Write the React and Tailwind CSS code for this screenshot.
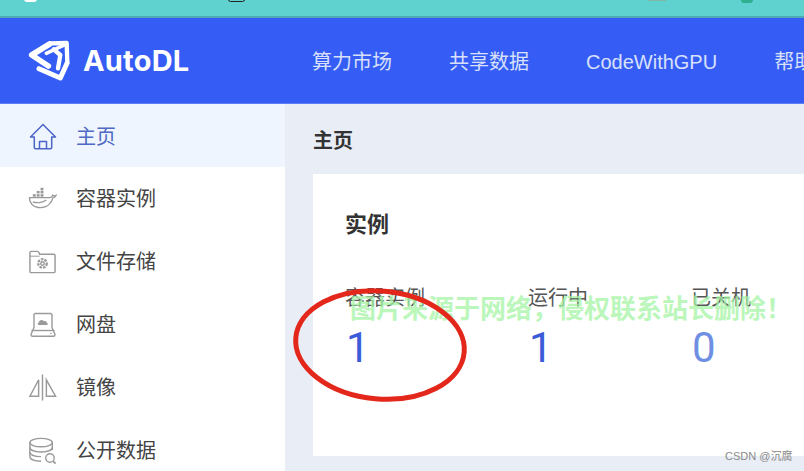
import React from "react";

const cjk = '"Liberation Sans","Noto Sans CJK SC",sans-serif';

const Dock = () => (
  <svg width="30" height="24" viewBox="0 0 30 24" fill="none" stroke="#9a9a9a" strokeWidth="1.300">
    <path d="M1.500 10.500h21c1.500 0 2.500-.8 3-2.500 1 .7 2.500.8 3.500.3-.6 1.300-1.600 2-3 2.200-1.600 5.500-6 10.500-13 10.500-7.500 0-11.500-4.500-11.500-10.500z" />
    <path d="M5 15c4 1.500 10 1 14-2" />
    <g fill="#9a9a9a" stroke="none">
      <rect x="5" y="7" width="3" height="2.600" />
      <rect x="9" y="7" width="3" height="2.600" />
      <rect x="13" y="7" width="3" height="2.600" />
      <rect x="9" y="3.600" width="3" height="2.600" />
      <rect x="13" y="3.600" width="3" height="2.600" />
      <rect x="13" y="0.400" width="3" height="2.600" />
    </g>
  </svg>
);

const Folder = () => (
  <svg width="30" height="26" viewBox="0 0 30 26" fill="none" stroke="#9a9a9a" strokeWidth="1.500">
    <path d="M2 3.500c0-1 .5-1.500 1.500-1.500h6c1 0 1.500.5 2 1.500l.5 1.500h14.500c1 0 1.500.5 1.500 1.500v16c0 1-.5 1.500-1.500 1.500h-23c-1 0-1.500-.5-1.500-1.500z" />
    <path d="M2 7h10" strokeWidth="1" />
    <circle cx="15" cy="14.500" r="1.800" />
    <circle cx="15" cy="14.500" r="4.400" strokeWidth="2.400" strokeDasharray="2.600 1.100" />
  </svg>
);

const Disk = () => (
  <svg width="28" height="26" viewBox="0 0 28 26" fill="none" stroke="#9a9a9a" strokeWidth="1.400">
    <path d="M6 1.500h16l1 1v13l3 7c0 1-.6 1.800-1.600 1.800H3.600C2.600 24.300 2 23.500 2 22.500l3-7v-13z" />
    <path d="M2.500 18.500h23" />
    <path d="M10 13c-1.500 0-1.800-2.200-.2-2.600.3-2.300 3.400-3.300 5-1.300 1.400-.6 3 .3 3 1.700 1.500.3 1.300 2.200-.3 2.200z" fill="#9a9a9a" stroke="none" />
    <circle cx="22" cy="21.500" r=".8" fill="#9a9a9a" stroke="none" />
  </svg>
);

const Mirror = () => (
  <svg width="30" height="30" viewBox="0 0 30 30" fill="none" stroke="#9a9a9a" strokeWidth="1.500">
    <path d="M15 1v27" />
    <path d="M11 6.500V23.500H2z" />
    <path d="M19 6.500V23.500H28.500z" />
  </svg>
);

const Data = () => (
  <svg width="31" height="30" viewBox="0 0 31 30" fill="none" stroke="#9a9a9a" strokeWidth="1.500">
    <ellipse cx="14" cy="6" rx="12" ry="4.500" />
    <path d="M2 6v15c0 3 5 5 12 5" />
    <path d="M26 6v8" />
    <path d="M2 11c0 3 5 5 12 5s12-2 12-5" />
    <path d="M2 16c0 3 5 5 12 5" />
    <circle cx="23.500" cy="22.500" r="4.500" fill="#fff" />
    <path d="M27 26l2.500 2.500" strokeWidth="2" />
  </svg>
);

const Home = () => (
  <svg width="28" height="28" viewBox="0 0 28 28" fill="none" stroke="#4a64c8" strokeWidth="1.500" strokeLinejoin="round">
    <path d="M14 1.500L1.500 14h3.800v10.500c0 .7.500 1.200 1.200 1.200h15c.7 0 1.200-.5 1.200-1.200V14h3.800z" />
    <path d="M10.500 25.500v-7h7v7" />
  </svg>
);

const Logo = () => (
  <svg width="42" height="41" viewBox="85 120 126 123" fill="none" stroke="#fff" strokeLinecap="round" strokeLinejoin="round">
    <path d="M150 132L96 165L146 198" strokeWidth="17" />
    <path d="M152 130L201 129L203 188" strokeWidth="13" />
    <path d="M196 134L140 160" strokeWidth="11" />
    <path d="M162 148L182 165L175 205" strokeWidth="13" />
    <path d="M118 206L182 234L202 190" strokeWidth="15" />
  </svg>
);

const items = [
  ["容器实例", <Dock />],
  ["文件存储", <Folder />],
  ["网盘", <Disk />],
  ["镜像", <Mirror />],
  ["公开数据", <Data />],
];

const nav = ["算力市场", "共享数据", "CodeWithGPU", "帮助文档"];

const stats = [
  ["容器实例", "1", "text-[#3b5bd9]", "w-[183px]"],
  ["运行中", "1", "text-[#3b5bd9]", "w-[163px]"],
  ["已关机", "0", "text-[#6f8fe3]", "w-[80px]"],
];

export default function App() {
  return (
    <div
      className="relative w-[804px] h-[471px] overflow-hidden flex flex-col bg-[#e9edf5]"
      style={{ fontFamily: cjk }}
    >
      <div className="relative h-[18px] shrink-0 bg-[#5fd2d0] border-b-2 border-[#4fa9b5]">
        <div className="absolute left-[24px] -top-[4px] w-[13px] h-[6px] rounded-full bg-white" />
        <div className="absolute left-[228px] -top-[3px] w-[17px] h-[5px] rounded-sm border border-[#222] bg-[#5fd2d0]" />
        <div className="absolute left-[647px] -top-[3px] w-[20px] h-[4px] rounded-full bg-[#7fb8a0]" />
        <div className="absolute left-[741px] -top-[3px] w-[12px] h-[6px] rounded-full bg-[#2fae90]" />
      </div>
      <header className="h-[86px] shrink-0 bg-[#355df5] flex items-center border-b border-[#5f80f5]">
        <div className="w-[312px] shrink-0 pl-[28px] flex items-center gap-[13px]">
          <Logo />
          <span className="text-[29px] leading-none font-bold text-white tracking-[0.2px]" style={{ fontFamily: '"Inter",sans-serif' }}>AutoDL</span>
        </div>
        <nav className="flex items-center gap-[57px] whitespace-nowrap text-[20px] text-[#d8e0fa] pt-[2px]">
          {nav.map((t) => (
            <span key={t}>{t}</span>
          ))}
        </nav>
      </header>
      <div className="flex flex-1 min-h-0">
        <aside className="w-[285px] shrink-0 bg-white flex flex-col">
          <div className="h-[63px] shrink-0 bg-[#eef5fe] flex items-center pl-[28px] pt-[2px] gap-[19px] text-[20px] text-[#5068c6]">
            <span className="w-[29px] flex justify-center"><Home /></span>
            <span>主页</span>
          </div>
          {items.map(([t, icon]) => (
            <div key={t} className="h-[63px] shrink-0 flex items-center pl-[28px] pt-[1px] gap-[19px] text-[20px] text-[#444]">
              <span className="w-[29px] flex justify-center">{icon}</span>
              <span>{t}</span>
            </div>
          ))}
        </aside>
        <main className="flex-1 min-w-0 pl-[28px] flex flex-col">
          <div className="h-[70px] shrink-0 flex items-center text-[20px] font-bold text-[#333] pt-[3px]">主页</div>
          <section className="h-[282px] bg-white pl-[32px] pt-[34px]">
            <h2 className="text-[22px] leading-[34px] font-bold text-[#333]">实例</h2>
            <div className="flex mt-[44px]">
              {stats.map(([label, value, color, w]) => (
                <div key={label} className={`${w} shrink-0`}>
                  <div className="text-[20px] leading-[24px] text-[#555] whitespace-nowrap">{label}</div>
                  <div className={`text-[42px] leading-[48px] mt-[14px] pl-[1px] font-['Roboto'] ${color}`}>{value}</div>
                </div>
              ))}
            </div>
          </section>
        </main>
      </div>

      <div className="absolute left-[350px] top-[293px] text-[26px] leading-[32px] font-bold text-[#a5f5a5] whitespace-nowrap opacity-75 [text-spacing-trim:space-all]">
        图片来源于网络，侵权联系站长删除！
      </div>
      <svg className="absolute left-[290px] top-[282px]" width="182" height="124" viewBox="0 0 182 124" fill="none">
        <ellipse cx="90" cy="63" rx="84.500" ry="54" stroke="#e3271b" strokeWidth="5" transform="rotate(5 90 63)" />
      </svg>
      <div className="absolute left-[725px] top-[449px] text-[11px] leading-[14px] text-[#8a8a8a] whitespace-nowrap">CSDN @沉腐</div>
    </div>
  );
}
